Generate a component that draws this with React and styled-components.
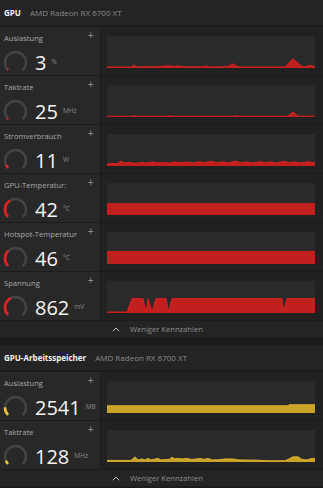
import styled, { createGlobalStyle } from 'styled-components'

const Global = createGlobalStyle`
  html, body { margin: 0; padding: 0; background: #1b1b1b; }
  body { font-family: "Open Sans", "Noto Sans", sans-serif; }
`

const RED = { fill: '#c21f1f', line: '#e4221d' }
const YELLOW = { fill: '#c9a227', line: '#f0c232' }

const Page = styled.div`
  width: 323px;
  min-height: 488px;
  background: #1b1b1b;
  display: flex;
  flex-direction: column;
  gap: 8px;
`

const Section = styled.section`
  display: flex;
  flex-direction: column;
  gap: 2px;
`

const Header = styled.div`
  height: 25px;
  background: #242424;
  display: flex;
  align-items: center;
  gap: 9px;
  padding: 0 4px;
  font-size: 8px;
  .title { color: #f2f2f2; font-weight: 700; }
  .device { color: #8a8a8a; }
`

const Row = styled.div`
  height: 47px;
  display: grid;
  grid-template-columns: 100px 1fr;
  gap: 1px;
`

const Stat = styled.div`
  background: #282828;
  padding: 5px 4px 0 3px;
  display: flex;
  flex-direction: column;
`

const LabelLine = styled.div`
  display: flex;
  justify-content: space-between;
  align-items: center;
  height: 11px;
  padding-left: 1px;
  font-size: 7.6px;
  color: #a8a8a8;
`

const Plus = styled.span`
  font-size: 12px;
  font-weight: 300;
  color: #bdbdbd;
  line-height: 1;
  margin-top: -3px;
  margin-right: 2px;
`

const Body = styled.div`
  display: flex;
  align-items: center;
  margin-top: 7px;
  height: 25px;
`

const Value = styled.span`
  margin-left: 7px;
  font-size: 20px;
  color: #f4f4f4;
  line-height: 1;
`

const Unit = styled.span`
  margin-left: 5px;
  margin-top: -2px;
  font-size: 6.5px;
  color: #8a8a8a;
`

const ChartCard = styled.div`
  background: #212121;
  padding: 9px 8px 7px 6px;
  display: flex;
`

const Plot = styled.div`
  flex: 1;
  background: #2a2a2a;
  display: flex;
  svg { width: 100%; height: 100%; display: block; }
`

const Toggle = styled.div`
  height: 16px;
  background: #242424;
  display: flex;
  align-items: center;
  padding-left: 112px;
  gap: 10px;
  font-size: 7.6px;
  color: #8f8f8f;
`

const Gauge = ({ p, color }) => {
  const r = 10.5
  const c = 2 * Math.PI * r
  const arc = c * 0.75
  return (
    <svg width="25" height="25" viewBox="0 0 25 25">
      <g transform="rotate(135 12.5 12.5)">
        <circle cx="12.5" cy="12.5" r={r} fill="none" stroke="#444" strokeWidth="2.4"
          strokeDasharray={`${arc} ${c}`} />
        <circle cx="12.5" cy="12.5" r={r} fill="none" stroke={color} strokeWidth="2.6"
          strokeDasharray={`${Math.max(arc * p, 1.2)} ${c}`} />
      </g>
    </svg>
  )
}

const W = 208
const H = 31

const Chart = ({ pts, color }) => {
  const top = pts.map(([x, h]) => `${x},${H - h}`).join(' ')
  return (
    <Plot>
      <svg viewBox={`0 0 ${W} ${H}`} preserveAspectRatio="none">
        <polygon points={`0,${H} ${top} ${W},${H}`} fill={color.fill} />
        <polyline points={top} fill="none" stroke={color.line} strokeWidth="0.8" />
      </svg>
    </Plot>
  )
}

const Chevron = () => (
  <svg width="8" height="5" viewBox="0 0 8 5">
    <polyline points="0.8,4.2 4,1 7.2,4.2" fill="none" stroke="#bdbdbd" strokeWidth="1" />
  </svg>
)

const flat = (h) => [[0, h], [W, h]]

const gpuRows = [
  {
    label: 'Auslastung', value: '3', unit: '%', p: 0.01,
    pts: [[0, 1], [24, 1], [27, 3], [30, 1], [40, 1.5], [44, 1], [52, 1.5], [62, 2.2], [66, 1.6], [72, 2], [76, 1.2],
      [95, 1.2], [100, 2], [103, 1], [118, 1.2], [122, 2], [126, 4], [130, 1.5], [134, 1], [178, 1], [186, 9],
      [194, 2], [198, 1], [202, 2.5], [206, 2], [208, 1.2]],
  },
  {
    label: 'Taktrate', value: '25', unit: 'MHz', p: 0.02,
    pts: [[0, 0.8], [26, 0.8], [28, 1.4], [30, 0.8], [60, 0.8], [62, 1.3], [64, 0.8], [126, 0.8], [128, 1.5],
      [130, 0.8], [181, 0.8], [186, 5], [191, 0.8], [208, 0.8]],
  },
  {
    label: 'Stromverbrauch', value: '11', unit: 'W', p: 0.07,
    pts: [[0, 2], [6, 2.5], [10, 2.2], [14, 4.5], [18, 3], [24, 3.5], [28, 2.5], [34, 3.5], [40, 3], [46, 4],
      [50, 3], [56, 3.5], [62, 2.8], [68, 4], [74, 3.2], [80, 3.8], [86, 3], [92, 4.2], [98, 3.4], [104, 4.5],
      [110, 3.2], [116, 4], [122, 3], [128, 4.8], [134, 3.2], [140, 4], [146, 3], [152, 4.2], [158, 3.4], [164, 4],
      [170, 3], [176, 4.5], [182, 3.4], [188, 4], [194, 3], [200, 4.2], [208, 3.2]],
  },
  { label: 'GPU-Temperatur:', value: '42', unit: '°C', p: 0.38, pts: flat(11) },
  { label: 'Hotspot-Temperatur', value: '46', unit: '°C', p: 0.34, pts: flat(12) },
  {
    label: 'Spannung', value: '862', unit: 'mV', p: 0.4,
    pts: [[0, 1], [20, 1], [25, 14], [36, 14], [39, 1], [41, 14], [45, 1], [49, 14], [59, 14], [61.5, 1],
      [65, 14], [175, 14], [176.5, 2], [180, 14], [208, 14]],
  },
]

const memRows = [
  { label: 'Auslastung', value: '2541', unit: 'MB', p: 0.17, pts: [[0, 7], [181, 7], [182, 8], [208, 8]] },
  {
    label: 'Taktrate', value: '128', unit: 'MHz', p: 0.08,
    pts: [[0, 1.5], [24, 1.5], [28, 5], [31, 2], [35, 3], [38, 2], [41, 3.5], [44, 2], [51, 3.5], [54, 2],
      [62, 2.5], [65, 4.5], [68, 3], [71, 3.5], [75, 3], [80, 3.5], [84, 2.5], [90, 3], [93, 3.5], [97, 2.5],
      [101, 3.5], [105, 2], [112, 2.2], [118, 3], [126, 3], [132, 2], [150, 1.8], [160, 1.2], [178, 1.2],
      [182, 3], [186, 5], [191, 5], [195, 2.5], [200, 2], [205, 3.5], [208, 3.5]],
  },
]

const Metric = ({ row, color }) => (
  <Row>
    <Stat>
      <LabelLine>
        <span>{row.label}</span>
        <Plus>+</Plus>
      </LabelLine>
      <Body>
        <Gauge p={row.p} color={color.line} />
        <Value>{row.value}</Value>
        <Unit>{row.unit}</Unit>
      </Body>
    </Stat>
    <ChartCard>
      <Chart pts={row.pts} color={color} />
    </ChartCard>
  </Row>
)

const Group = ({ title, rows, color }) => (
  <Section>
    <Header>
      <span className="title">{title}</span>
      <span className="device">AMD Radeon RX 6700 XT</span>
    </Header>
    {rows.map((r) => <Metric key={r.label} row={r} color={color} />)}
    <Toggle>
      <Chevron />
      <span>Weniger Kennzahlen</span>
    </Toggle>
  </Section>
)

export default function App() {
  return (
    <Page>
      <Global />
      <Group title="GPU" rows={gpuRows} color={RED} />
      <Group title="GPU-Arbeitsspeicher" rows={memRows} color={YELLOW} />
    </Page>
  )
}
